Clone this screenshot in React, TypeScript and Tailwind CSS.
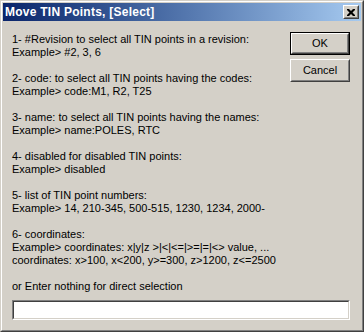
import React from "react";

const lines: string[] = [
  "1- #Revision to select all TIN points in a revision:",
  "Example> #2, 3, 6",
  "",
  "2- code: to select all TIN points having the codes:",
  "Example> code:M1, R2, T25",
  "",
  "3- name: to select all TIN points having the names:",
  "Example> name:POLES, RTC",
  "",
  "4- disabled for disabled TIN points:",
  "Example> disabled",
  "",
  "5- list of TIN point numbers:",
  "Example> 14, 210-345, 500-515, 1230, 1234, 2000-",
  "",
  "6- coordinates:",
  "Example> coordinates: x|y|z >|<|<=|>=|=|<> value, ...",
  "coordinates: x>100, x<200, y>=300, z>1200, z<=2500",
  "",
];

function Raised({ children, className = "" }: { children: React.ReactNode; className?: string }) {
  return (
    <div className={`border border-t-white border-l-white border-b-[#404040] border-r-[#404040] ${className}`}>
      <div className="w-full h-full border border-t-[#d4d0c8] border-l-[#d4d0c8] border-b-[#808080] border-r-[#808080] flex items-center justify-center">
        {children}
      </div>
    </div>
  );
}

export default function App() {
  return (
    <div
      className="w-[364px] h-[332px] bg-[#d4d0c8] text-black"
      style={{ fontFamily: '"Liberation Sans", Arial, sans-serif' }}
    >
      <div className="w-full h-full border border-t-[#d4d0c8] border-l-[#d4d0c8] border-b-[#404040] border-r-[#404040]">
        <div className="w-full h-full border border-t-white border-l-white border-b-[#808080] border-r-[#808080] p-px flex flex-col">
          {/* title bar */}
          <div className="h-[18px] flex items-center bg-gradient-to-r from-[#0a246a] to-[#a6caf0] pl-[2px] pr-[2px]">
            <span className="text-white font-bold text-[12px] leading-none tracking-[0.25px]">Move TIN Points, [Select]</span>
            <div className="ml-auto w-[16px] h-[14px]">
              <Raised className="w-full h-full bg-[#d4d0c8]">
                <svg width="8" height="7" viewBox="0 0 8 7" className="block">
                  <path d="M0 0h2l2 2 2-2h2v1l-2.5 2.5L8 6v1H6L4 5 2 7H0V6l2.5-2.5L0 1z" fill="#000" />
                </svg>
              </Raised>
            </div>
          </div>
          {/* content */}
          <div className="flex-1 pl-[9px] pr-[11px] pt-[12px] flex flex-col">
            <div className="flex items-start">
              <div className="flex-1 text-[11px] leading-[13px]">
                {lines.map((l, i) => (
                  <div key={i} className="h-[13px] whitespace-pre">
                    {l}
                  </div>
                ))}
              </div>
              <div className="w-[60px] -mt-px flex flex-col gap-[4px] text-[11px]">
                <div className="h-[23px] border border-black">
                  <Raised className="w-full h-full">OK</Raised>
                </div>
                <Raised className="h-[23px]">Cancel</Raised>
              </div>
            </div>
            <div className="text-[11px] leading-[13px] h-[13px] whitespace-pre">or Enter nothing for direct selection</div>
            <div className="mt-[7px] h-[20px] border border-t-[#808080] border-l-[#808080] border-b-white border-r-white">
              <div className="w-full h-full bg-white border border-t-[#404040] border-l-[#404040] border-b-[#d4d0c8] border-r-[#d4d0c8]" />
            </div>
          </div>
        </div>
      </div>
    </div>
  );
}
